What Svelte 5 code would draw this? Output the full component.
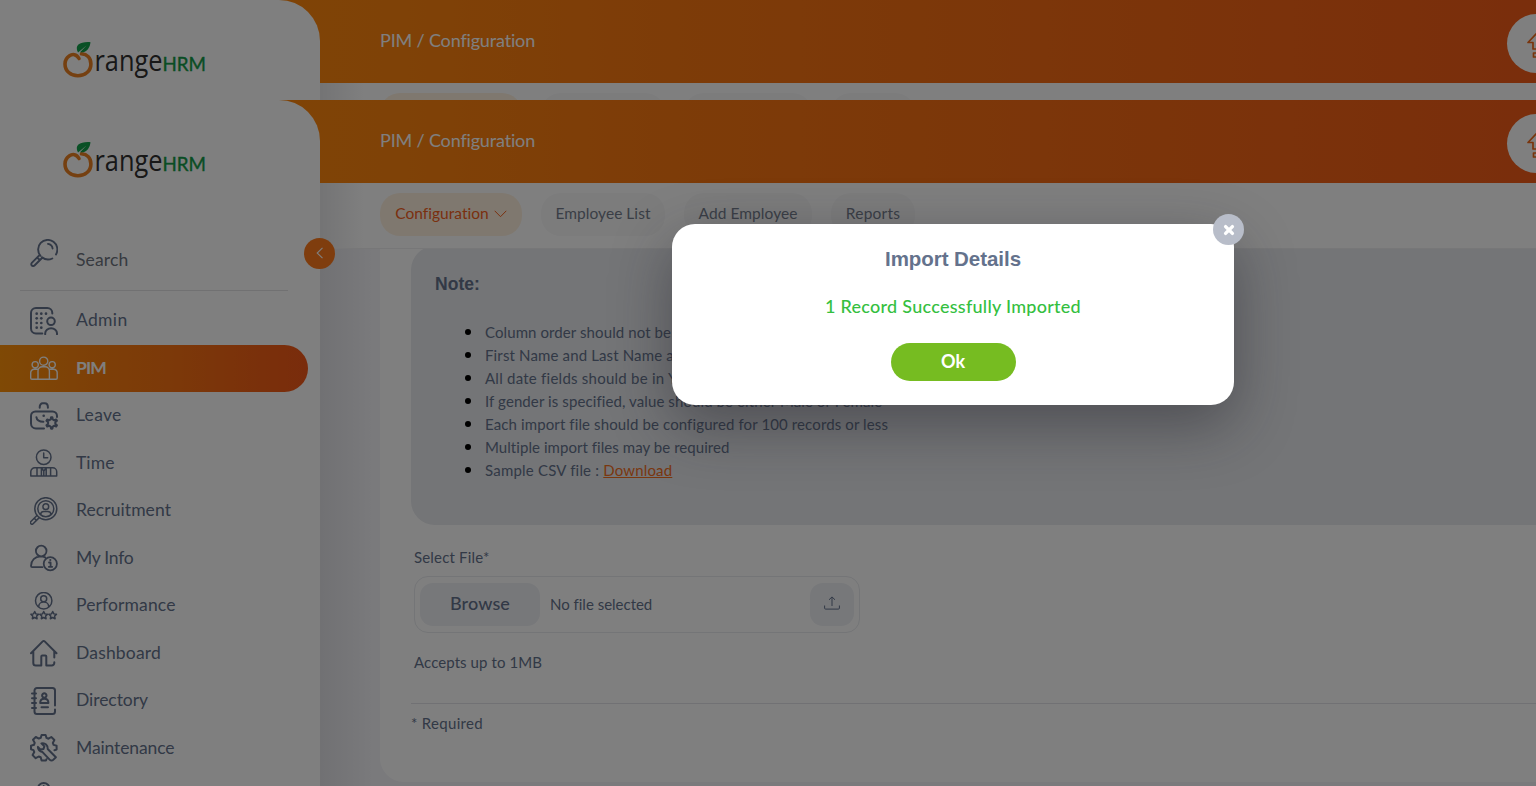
<script>
  function gear(cx, cy, outer, inner, teeth) {
    const step = (Math.PI * 2) / teeth;
    const parts = [];
    for (let i = 0; i < teeth; i++) {
      const a = i * step - Math.PI / 2;
      for (const [offset, r] of [[-0.28, inner], [-0.12, outer], [0.12, outer], [0.28, inner]]) {
        const t = a + offset * step;
        parts.push(`${(cx + r * Math.cos(t)).toFixed(2)} ${(cy + r * Math.sin(t)).toFixed(2)}`);
      }
    }
    return `M${parts.join('L')}Z`;
  }

  function star(cx, cy, r) {
    const parts = [];
    for (let i = 0; i < 10; i++) {
      const t = (i * Math.PI) / 5 - Math.PI / 2;
      const k = i % 2 ? r * 0.5 : r;
      parts.push(`${(cx + k * Math.cos(t)).toFixed(2)} ${(cy + k * Math.sin(t)).toFixed(2)}`);
    }
    return `M${parts.join('L')}Z`;
  }

  // Spreads the letters so that a label takes exactly the given width.
  function fit(node, width) {
    const natural = node.getBoundingClientRect().width;
    node.style.letterSpacing = `${(width - natural) / node.textContent.length}px`;
  }

  const ring = (x, y, r) => `M${x - r} ${y}a${r} ${r} 0 1 0 ${2 * r} 0a${r} ${r} 0 1 0 ${-2 * r} 0`;

  const menu = [
    {
      label: 'Admin', w: 51.5, sw: 2,
      d: `M22.3 6.5V6a5 5 0 0 0-5-5H6a5 5 0 0 0-5 5V21.5a5 5 0 0 0 5 5H12.3${ring(21, 14.3, 3.8)}M15.2 27.2v-.9a5.9 5 0 0 1 11.8 0v.9`,
      dots: [[6.7, 6.7], [11.3, 6.7], [16, 6.7], [6.7, 11.3], [11.3, 11.3], [6.7, 16], [11.3, 16], [6.7, 20.7], [11.3, 20.7]], dot: 1.35
    },
    {
      label: 'PIM', w: 30, sw: 1.4, active: true,
      d: `${ring(13.7, 7.2, 4.1)}${ring(5.2, 10.7, 3.1)}${ring(22.2, 10.7, 3.1)}M8 25.2V17a4.3 4.3 0 0 1 4.3-4.3h2.8A4.3 4.3 0 0 1 19.4 17v8.2M8 15.2H4.2A3.5 3.5 0 0 0 .7 18.7v5.3a1.2 1.2 0 0 0 1.2 1.2H26a1.2 1.2 0 0 0 1.2-1.2v-5.3a3.5 3.5 0 0 0-3.5-3.5h-4`
    },
    {
      label: 'Leave', w: 45.5, sw: 2,
      d: `M9.7 5.8v-.6C9.7 2.8 11 1.2 12.7 1.2h2C16.6 1.2 17.9 2.8 17.9 5.2v.6M27 15v-1a4.5 4.5 0 0 0-4.5-4.5H5.5A4.5 4.5 0 0 0 1 14v7.5a5 5 0 0 0 5 5h8M6.4 15.2q.6 4.6 7 4.6${gear(21.7, 21, 5.7, 3.7, 6)}`,
      dots: [[13.7, 13.8]], dot: 1.3
    },
    {
      label: 'Time', w: 38.5, sw: 1.5,
      d: `${ring(13.7, 8.2, 7.3)}M13.7 4v4.7h4M.8 27v-4.2a4 4 0 0 1 4-4h17.9a4 4 0 0 1 4 4V27ZM7 19v8M20.6 19v8M11.4 19v8M16.2 19v8M11.6 19.2l2.2 2.8 2.2-2.8M13.8 22v5`
    },
    {
      label: 'Recruitment', w: 95, sw: 1.5,
      d: `${ring(15.8, 11.7, 11)}${ring(15.8, 11.7, 8)}${ring(15.8, 9.7, 2.9)}M10.5 17.4c.4-2 1.8-2.8 3.4-2.8h3.8c1.6 0 3 .8 3.4 2.8M6.7 18.7L.9 24.5a1.5 1.5 0 0 0 2.2 2.2L9 20.9M4.3 21.3l2.2 2.2`
    },
    {
      label: 'My Info', w: 57.5, sw: 1.8,
      d: `${ring(11.2, 7, 5.3)}M12.3 23.2H2.2A1.2 1.2 0 0 1 1 22C1 16.5 5 12.6 10.5 12.4q2.7 0 4.7 1${ring(20.3, 19.7, 6.6)}M19 18.500h1.600v4.200M18.800 22.800h3.400`,
      dots: [[20.3, 16]], dot: 1.1
    },
    {
      label: 'Performance', w: 99.5, sw: 1.5,
      d: `${ring(13.7, 8.7, 8.2)}${ring(13.7, 6.7, 3)}M8.8 15v-.8a4.9 4.2 0 0 1 9.8 0v.8${star(4.7, 23.5, 4)}${star(13.7, 23.5, 4)}${star(22.7, 23.5, 4)}`
    },
    {
      label: 'Dashboard', w: 85, sw: 2,
      d: 'M1 14.2L12.7 2.4q1-1 2 0L26.5 14.2M3.3 12.5V24a2.500 2.500 0 0 0 2.500 2.500h5.500V17.500a1 1 0 0 1 1-1h3a1 1 0 0 1 1 1v9h5.500a2.500 2.500 0 0 0 2.500-2.500v-.7M24.300 12.500v6'
    },
    {
      label: 'Directory', w: 72, sw: 2,
      d: `M25 18.5V3.5A2.500 2.500 0 0 0 22.500 1H7A2.500 2.500 0 0 0 4.500 3.500v21A2.500 2.500 0 0 0 7 27h15.500a2.500 2.500 0 0 0 2.500-2.500V22.500M2 6.500h4M2 11.300h4M2 16h4M2 21h4${ring(14.3, 8.5, 2.2)}M10.200 16q0-4.200 4.100-4.200t4.100 4.200ZM11.500 20.300h6.500`
    },
    {
      label: 'Maintenance', w: 98.5, sw: 2,
      d: 'M16.5 25.2l-.5 1.3h-4.4l-.9-3.2-2-.8-3 1.7-3.1-3.1 1.7-3-.8-2L1 15.2v-3.500l3-.9.7-2L3 5.800 5.800 3l3 1.600 2-.8L11.600 1h4l.9 2.900 2 .8L21.300 3 24.400 6l-1.600 2.900.8 2 3 .8v3.900l-2.200.7M12.300 17.900l7.600 8a2.300 2.300 0 0 0 3.300 0l2.700-2.700L17.700 15A5 5 0 0 0 11.400 9.400l3 3-1 2.700-2.800.5-2.700-2.700A5 5 0 0 0 12.300 17.900'
    },
    { label: '', w: 0, sw: 1.8, d: `${ring(13.7, 7, 6)}M13.7 4v6M11.800 5h3.500M11.800 8.500h3.500` }
  ];

  const tabs = [
    { label: 'Configuration', w: 93.5, box: 142, open: true },
    { label: 'Employee List', w: 95, box: 124 },
    { label: 'Add Employee', w: 99, box: 128 },
    { label: 'Reports', w: 54.5, box: 84 }
  ];

  const notes = [
    ['Column order should not be changed', 246],
    ['First Name and Last Name are compulsory', 284],
    ['All date fields should be in YYYY-MM-DD format', 333],
    ['If gender is specified, value should be either Male or Female', 397],
    ['Each import file should be configured for 100 records or less', 402.5],
    ['Multiple import files may be required', 244.5]
  ];
</script>

{#snippet screen(whole)}
  <div class="screen">
    <header>
      <span class="crumb"><span use:fit={155}>PIM / Configuration</span></span>
      <span class="upgrade">
        <svg width="28" height="30" viewBox="0 0 28 30">
          <path d="M1 11.500L11 1l10 10.500h-5V18H6v-6.500ZM6.500 22h9v4h-9Z" fill="none" stroke="#f26a1b" stroke-width="1.700" stroke-linejoin="round" />
        </svg>
      </span>
    </header>
    <aside>
      <svg class="brand" width="146" height="44" viewBox="0 0 146 44" role="img" aria-label="OrangeHRM">
        <path d="M17 18.500C14.500 14 10.500 13.600 7.500 15.800C4.500 17.800 3 20.500 3 23.900C3 31 8.800 35.800 15.900 35.800S28.900 31 28.900 23.900C28.900 18 25 14.300 19.500 13.800" fill="none" stroke="#ea8022" stroke-width="3.600" stroke-linecap="round" />
        <path d="M16 12.600C12 4.800 18.500 1.500 28.500 2.200C28 7.500 24.500 13.300 18 12.200l6.500-6.700Z" fill="#13a04a" />
        <text x="32.500" y="31" font-size="29" fill="#303030" textLength="68" lengthAdjust="spacingAndGlyphs">range</text>
        <text class="hrm" x="100.500" y="30.500" font-size="20" textLength="43.500" lengthAdjust="spacingAndGlyphs">HRM</text>
      </svg>
      {#if whole}
        <div class="search">
          <svg width="28" height="28" viewBox="0 0 28 28">
            <path d="M12 18.200a9.600 9.600 0 0 0 10.300 1.300M26 15.400A9.600 9.600 0 1 0 10.500 16.800M18 4.900a5.300 5.300 0 0 1 4.600 4.600M9.200 16.400L1.800 23.800a1.900 1.900 0 0 0 2.700 2.700L12 19M7.300 18.600l2.400 2.400" fill="none" stroke="currentColor" stroke-width="1.900" stroke-linecap="round" />
          </svg>
          <span class="query"><span use:fit={52.5}>Search</span></span>
        </div>
        <hr />
        <nav>
          {#each menu as item}
            <a class:active={item.active} href="#top">
              <svg width="28" height="28" viewBox="0 0 28 28">
                <path d={item.d} fill="none" stroke="currentColor" stroke-width={item.sw} stroke-linecap="round" stroke-linejoin="round" />
                {#each item.dots ?? [] as [x, y]}
                  <circle cx={x} cy={y} r={item.dot} fill="currentColor" />
                {/each}
              </svg>
              {#if item.label}<span use:fit={item.w}>{item.label}</span>{/if}
            </a>
          {/each}
        </nav>
      {/if}
    </aside>
    <main>
      <div class="tabs">
        {#each tabs as tab}
          <div class="tab" class:open={tab.open} style:width="{tab.box}px">
            {#if whole}
              <span use:fit={tab.w}>{tab.label}</span>
              {#if tab.open}
                <svg width="13" height="8" viewBox="0 0 13 8"><path d="M.7.8l5.800 5.900L12.300.8" fill="none" stroke="currentColor" /></svg>
              {/if}
            {/if}
          </div>
        {/each}
      </div>
      {#if whole}
        <div class="content">
          <section class="card">
            <div class="note">
              <h2><span use:fit={45}>Note:</span></h2>
              <ul>
                {#each notes as [text, w]}
                  <li><span use:fit={w}>{text}</span></li>
                {/each}
                <li><span use:fit={118}>Sample CSV file :&nbsp;</span><a href="#top" use:fit={69}>Download</a></li>
              </ul>
            </div>
            <div class="field">
              <div class="label"><span use:fit={75.5}>Select File*</span></div>
              <div class="file">
                <span class="browse"><span use:fit={60}>Browse</span></span>
                <span class="none"><span use:fit={102}>No file selected</span></span>
                <span class="up">
                  <svg width="16" height="14" viewBox="0 0 16 14"><path d="M.6 9.500v2.600q0 1 1 1h12.800q1 0 1-1V9.500M8 10V1M5 3.800L8 .9l3 2.900" fill="none" stroke="currentColor" /></svg>
                </span>
              </div>
              <div class="hint"><span use:fit={128}>Accepts up to 1MB</span></div>
            </div>
            <div class="required"><span use:fit={72}>* Required</span></div>
          </section>
        </div>
      {/if}
    </main>
  </div>
{/snippet}

<div class="stage">
  <div class="peek">{@render screen(false)}</div>
  <div class="full">{@render screen(true)}</div>
  <button class="collapse" aria-label="Collapse menu">
    <svg width="8" height="12" viewBox="0 0 8 12"><path d="M6.500.8L1.200 6l5.300 5.200" fill="none" stroke="currentColor" stroke-width="1.100" /></svg>
  </button>
  <div class="shade"></div>
  <div class="dialog" role="dialog">
    <button class="close" aria-label="Close">
      <svg width="12" height="12" viewBox="0 0 12 12"><path d="M2.600 2.600l6.800 6.800M9.400 2.600L2.600 9.400" stroke="#fff" stroke-width="3.400" stroke-linecap="round" /></svg>
    </button>
    <h1><span use:fit={136}>Import Details</span></h1>
    <p><span use:fit={256}>1 Record Successfully Imported</span></p>
    <button class="ok"><span use:fit={24}>Ok</span></button>
  </div>
</div>

<style>
  :global(body) {
    margin: 0;
    overflow: hidden;
  }
  .stage {
    position: relative;
    width: 1536px;
    height: 786px;
    overflow: hidden;
    font-family: Lato, 'Open Sans', sans-serif;
    color: #64728c;
  }
  .stage * {
    box-sizing: border-box;
  }
  span,
  a {
    white-space: nowrap;
  }
  svg {
    display: block;
    flex: none;
  }
  .peek,
  .full {
    isolation: isolate;
    overflow: hidden;
  }
  .peek {
    height: 100px;
  }
  .full {
    height: 686px;
  }
  .screen {
    display: grid;
    grid-template: 83px 603px / 320px 1216px;
    height: 686px;
    overflow: hidden;
    background: #fff;
  }
  header {
    grid-area: 1 / 1 / 2 / 3;
    display: flex;
    justify-content: space-between;
    padding-left: 380px;
    background: linear-gradient(90deg, #ff8c0c, #ff850e 25%, #fb7811 44%, #f45c18);
    color: #fff;
    overflow: hidden;
  }
  .crumb {
    font-size: 18px;
    line-height: 80px;
  }
  .upgrade {
    width: 59px;
    height: 59px;
    margin: 14px -30px 0 0;
    padding: 17px 0 0 20px;
    border-radius: 50%;
    background: #fff;
  }
  aside {
    grid-area: 1 / 1 / 3 / 2;
    z-index: 1;
    background: #fff;
    border-top-right-radius: 41px;
    overflow: hidden;
  }
  .brand {
    margin: 40px 0 0 62px;
    font-family: 'Open Sans', sans-serif;
  }
  .hrm {
    font-family: Lato, sans-serif;
    fill: #149b48;
    stroke: #149b48;
    stroke-width: 0.4px;
  }
  .search {
    display: flex;
    gap: 18px;
    height: 52px;
    margin: 54px 0 0 30px;
    padding-top: 1px;
  }
  .query {
    padding-top: 11px;
    font-size: 17.500px;
    line-height: 20px;
    color: #6e7480;
  }
  hr {
    width: 268px;
    height: 1px;
    margin: 0 0 0 20px;
    border: 0;
    background: #e2e2e4;
  }
  nav {
    padding-top: 6.500px;
  }
  nav a {
    display: flex;
    align-items: center;
    gap: 18px;
    width: 308px;
    height: 47.500px;
    padding: 0 0 1px 30px;
    border-radius: 0 24px 24px 0;
    color: #64728c;
    font-size: 17.500px;
    text-decoration: none;
  }
  nav a span {
    padding-bottom: 2px;
  }
  nav a.active {
    height: 47px;
    margin-bottom: 0.500px;
    background: linear-gradient(90deg, #ff920b, #f35818);
    color: #fff;
    font-weight: 700;
  }
  nav a.active span {
    padding-bottom: 1px;
  }
  main {
    grid-area: 2 / 2 / 3 / 3;
    display: grid;
    grid-template-rows: 65px 538px;
    background: linear-gradient(90deg, #e8e8ea, #fff 45px);
  }
  .tabs {
    display: flex;
    gap: 19px;
    padding: 10px 0 0 60px;
  }
  .tab {
    display: flex;
    align-items: center;
    justify-content: center;
    gap: 5px;
    height: 43px;
    padding-bottom: 2px;
    border-radius: 20px;
    background: #f8f8f9;
    font-size: 15.500px;
    color: #757d8c;
  }
  .tab span {
    padding-bottom: 1px;
  }
  .tab.open {
    background: #fff1df;
    color: #f4601c;
  }
  .content {
    display: flex;
    flex-direction: column;
    overflow: hidden;
    padding-left: 60px;
    border-top: 1px solid #eeeef1;
    background: linear-gradient(90deg, #e2e2e7, #f5f5f9 55px);
  }
  .card {
    height: 533px;
    padding-left: 31px;
    border-radius: 0 0 0 24px;
    background: #fff;
  }
  .note {
    height: 279px;
    margin-top: -3px;
    padding: 27px 0 0 24px;
    border-radius: 24px 0 0 24px;
    background: #e8eaee;
  }
  h2 {
    margin: 0;
    font: 700 17.500px/22px 'Liberation Sans', Arial, sans-serif;
  }
  ul {
    margin: 27px 0 0;
    padding: 0 0 0 50px;
    list-style: none;
  }
  li {
    display: flex;
    height: 23px;
    font-size: 15px;
    line-height: 21px;
  }
  li::before {
    content: '';
    flex: none;
    width: 6px;
    height: 6px;
    margin: 7px 14px 0 -20px;
    border-radius: 50%;
    background: #000;
  }
  li a {
    color: #f4701f;
  }
  .field {
    height: 178px;
    padding: 22px 0 0 3px;
  }
  .label,
  .hint,
  .required {
    font-size: 15px;
    line-height: 20px;
  }
  .file {
    display: flex;
    align-items: center;
    width: 446px;
    height: 57px;
    margin-top: 9px;
    padding: 0 5px;
    border: 1px solid #e8eaee;
    border-radius: 14px;
  }
  .browse,
  .up {
    display: flex;
    align-items: center;
    justify-content: center;
    height: 43px;
    border-radius: 13px;
    background: #eef0f5;
  }
  .browse {
    width: 120px;
    padding-bottom: 3px;
    font-size: 18px;
    font-weight: 500;
  }
  .none {
    flex: 1;
    padding: 0 0 2px 10px;
    font-size: 15px;
  }
  .up {
    width: 44px;
    padding-bottom: 3px;
  }
  .hint {
    margin-top: 19px;
  }
  .required {
    padding-top: 9px;
    border-top: 1px solid #e2e3e8;
  }
  .shade {
    position: absolute;
    inset: 0;
    background: rgba(0, 0, 0, 0.5);
  }
  button {
    display: flex;
    align-items: center;
    justify-content: center;
    padding: 0;
    border: 0;
    font-family: inherit;
  }
  .collapse {
    position: absolute;
    left: 304px;
    top: 238px;
    width: 31px;
    height: 31px;
    padding-bottom: 2px;
    border-radius: 50%;
    background: #ff7b1d;
    color: #fff;
  }
  .dialog {
    position: absolute;
    left: 672px;
    top: 224px;
    display: flex;
    flex-direction: column;
    align-items: center;
    width: 562px;
    height: 181px;
    border-radius: 23px;
    background: #fff;
    box-shadow: 0 20px 60px rgba(30, 30, 40, 0.45);
  }
  .close {
    position: absolute;
    right: -10px;
    top: -10px;
    width: 31px;
    height: 31px;
    border-radius: 50%;
    background: #b8bdc9;
  }
  h1 {
    margin: 23px 0 0;
    font: 700 20.500px/24px 'Liberation Sans', Arial, sans-serif;
  }
  p {
    margin: 23px 0 0;
    font-size: 18px;
    line-height: 24px;
    font-weight: 500;
    color: #35bf3f;
  }
  .ok {
    width: 125px;
    height: 38px;
    margin-top: 25px;
    padding-bottom: 2px;
    border-radius: 19px;
    background: #76bc21;
    color: #fff;
    font-size: 18px;
    font-weight: 700;
  }
</style>
